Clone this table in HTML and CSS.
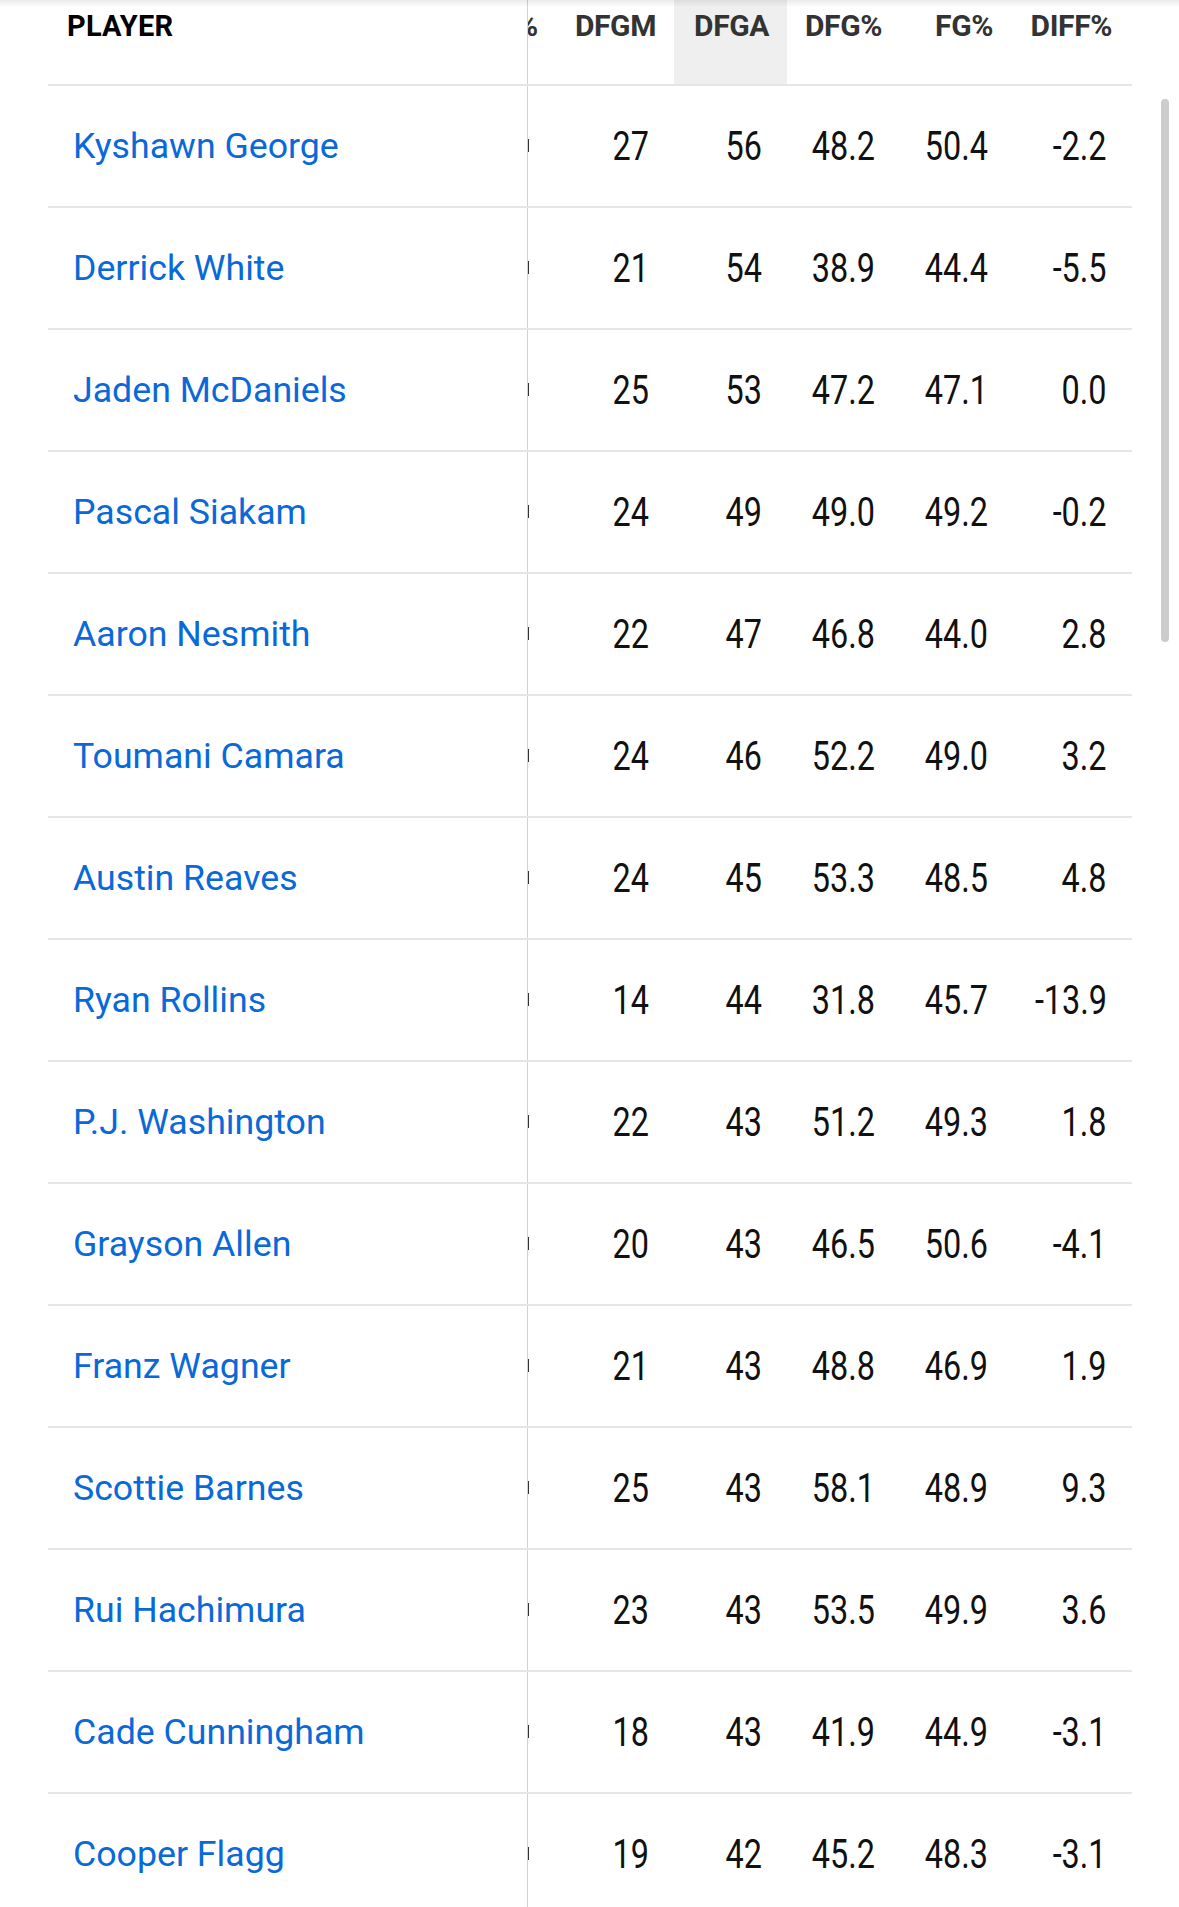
FILE: index.html
```html
<!DOCTYPE html>
<html lang="en">
<head>
<meta charset="utf-8">
<title>Defensive stats</title>
<link rel="stylesheet" href="styles.css">
</head>
<body>
<div class="page">
  <div class="stats">
    <div class="row head">
      <div class="cell name-col"><span class="player-h">PLAYER</span></div>
      <div class="cell part"><span class="hidden-h">%</span></div>
      <div class="cell num-h">DFGM</div>
      <div class="cell num-h sorted">DFGA</div>
      <div class="cell num-h">DFG%</div>
      <div class="cell num-h wide-h">FG%</div>
      <div class="cell num-h wide-h">DIFF%</div>
    </div>
    <div class="row"><div class="cell name-col"><a class="player">Kyshawn George</a></div><div class="cell part"><span class="sliver">0</span></div><div class="cell num"><span class="v">27</span></div><div class="cell num"><span class="v">56</span></div><div class="cell num"><span class="v">48.2</span></div><div class="cell num"><span class="v">50.4</span></div><div class="cell num"><span class="v">-2.2</span></div></div>
    <div class="row"><div class="cell name-col"><a class="player">Derrick White</a></div><div class="cell part"><span class="sliver">0</span></div><div class="cell num"><span class="v">21</span></div><div class="cell num"><span class="v">54</span></div><div class="cell num"><span class="v">38.9</span></div><div class="cell num"><span class="v">44.4</span></div><div class="cell num"><span class="v">-5.5</span></div></div>
    <div class="row"><div class="cell name-col"><a class="player">Jaden McDaniels</a></div><div class="cell part"><span class="sliver">0</span></div><div class="cell num"><span class="v">25</span></div><div class="cell num"><span class="v">53</span></div><div class="cell num"><span class="v">47.2</span></div><div class="cell num"><span class="v">47.1</span></div><div class="cell num"><span class="v">0.0</span></div></div>
    <div class="row"><div class="cell name-col"><a class="player">Pascal Siakam</a></div><div class="cell part"><span class="sliver">0</span></div><div class="cell num"><span class="v">24</span></div><div class="cell num"><span class="v">49</span></div><div class="cell num"><span class="v">49.0</span></div><div class="cell num"><span class="v">49.2</span></div><div class="cell num"><span class="v">-0.2</span></div></div>
    <div class="row"><div class="cell name-col"><a class="player">Aaron Nesmith</a></div><div class="cell part"><span class="sliver">0</span></div><div class="cell num"><span class="v">22</span></div><div class="cell num"><span class="v">47</span></div><div class="cell num"><span class="v">46.8</span></div><div class="cell num"><span class="v">44.0</span></div><div class="cell num"><span class="v">2.8</span></div></div>
    <div class="row"><div class="cell name-col"><a class="player">Toumani Camara</a></div><div class="cell part"><span class="sliver">0</span></div><div class="cell num"><span class="v">24</span></div><div class="cell num"><span class="v">46</span></div><div class="cell num"><span class="v">52.2</span></div><div class="cell num"><span class="v">49.0</span></div><div class="cell num"><span class="v">3.2</span></div></div>
    <div class="row"><div class="cell name-col"><a class="player">Austin Reaves</a></div><div class="cell part"><span class="sliver">0</span></div><div class="cell num"><span class="v">24</span></div><div class="cell num"><span class="v">45</span></div><div class="cell num"><span class="v">53.3</span></div><div class="cell num"><span class="v">48.5</span></div><div class="cell num"><span class="v">4.8</span></div></div>
    <div class="row"><div class="cell name-col"><a class="player">Ryan Rollins</a></div><div class="cell part"><span class="sliver">0</span></div><div class="cell num"><span class="v">14</span></div><div class="cell num"><span class="v">44</span></div><div class="cell num"><span class="v">31.8</span></div><div class="cell num"><span class="v">45.7</span></div><div class="cell num"><span class="v">-13.9</span></div></div>
    <div class="row"><div class="cell name-col"><a class="player">P.J. Washington</a></div><div class="cell part"><span class="sliver">0</span></div><div class="cell num"><span class="v">22</span></div><div class="cell num"><span class="v">43</span></div><div class="cell num"><span class="v">51.2</span></div><div class="cell num"><span class="v">49.3</span></div><div class="cell num"><span class="v">1.8</span></div></div>
    <div class="row"><div class="cell name-col"><a class="player">Grayson Allen</a></div><div class="cell part"><span class="sliver">0</span></div><div class="cell num"><span class="v">20</span></div><div class="cell num"><span class="v">43</span></div><div class="cell num"><span class="v">46.5</span></div><div class="cell num"><span class="v">50.6</span></div><div class="cell num"><span class="v">-4.1</span></div></div>
    <div class="row"><div class="cell name-col"><a class="player">Franz Wagner</a></div><div class="cell part"><span class="sliver">0</span></div><div class="cell num"><span class="v">21</span></div><div class="cell num"><span class="v">43</span></div><div class="cell num"><span class="v">48.8</span></div><div class="cell num"><span class="v">46.9</span></div><div class="cell num"><span class="v">1.9</span></div></div>
    <div class="row"><div class="cell name-col"><a class="player">Scottie Barnes</a></div><div class="cell part"><span class="sliver">0</span></div><div class="cell num"><span class="v">25</span></div><div class="cell num"><span class="v">43</span></div><div class="cell num"><span class="v">58.1</span></div><div class="cell num"><span class="v">48.9</span></div><div class="cell num"><span class="v">9.3</span></div></div>
    <div class="row"><div class="cell name-col"><a class="player">Rui Hachimura</a></div><div class="cell part"><span class="sliver">0</span></div><div class="cell num"><span class="v">23</span></div><div class="cell num"><span class="v">43</span></div><div class="cell num"><span class="v">53.5</span></div><div class="cell num"><span class="v">49.9</span></div><div class="cell num"><span class="v">3.6</span></div></div>
    <div class="row"><div class="cell name-col"><a class="player">Cade Cunningham</a></div><div class="cell part"><span class="sliver">0</span></div><div class="cell num"><span class="v">18</span></div><div class="cell num"><span class="v">43</span></div><div class="cell num"><span class="v">41.9</span></div><div class="cell num"><span class="v">44.9</span></div><div class="cell num"><span class="v">-3.1</span></div></div>
    <div class="row"><div class="cell name-col"><a class="player">Cooper Flagg</a></div><div class="cell part"><span class="sliver">0</span></div><div class="cell num"><span class="v">19</span></div><div class="cell num"><span class="v">42</span></div><div class="cell num"><span class="v">45.2</span></div><div class="cell num"><span class="v">48.3</span></div><div class="cell num"><span class="v">-3.1</span></div></div>
  </div>
  <div class="top-shade"></div>
  <div class="scroll-thumb"></div>
</div>
</body>
</html>
```

FILE: styles.css
```css
html, body {
  margin: 0;
  padding: 0;
  background: #ffffff;
}
body {
  height: 1907px;
  overflow: hidden;
  font-family: Roboto, "Noto Sans", sans-serif;
}
.page {
  position: relative;
  width: 1179px;
  height: 1907px;
  overflow: hidden;
}
.stats {
  margin-left: 48px;
  width: 1084px;
}
.row {
  display: grid;
  grid-template-columns: 480px 33px 113px 113px 113px 113px 119px;
  height: 120px;
  border-bottom: 2px solid #e6e6e6;
}
.row.head {
  height: 84px;
}
.cell {
  display: flex;
  align-items: center;
  justify-content: flex-end;
  box-sizing: border-box;
  overflow: hidden;
  white-space: nowrap;
}
.name-col {
  justify-content: flex-start;
  border-right: 1px solid #d2d2d2;
  padding-left: 25px;
}
.head .cell {
  align-items: flex-start;
}
.head .name-col {
  padding-left: 19px;
  padding-top: 9px;
}
.player-h {
  font-family: Roboto, sans-serif;
  font-weight: 700;
  font-size: 29px;
  color: #000;
  letter-spacing: 0.2px;
}
.part {
  justify-content: flex-start;
  padding-left: 0;
}
.head .part {
  padding-top: 8px;
}
.hidden-h {
  font-family: Roboto, sans-serif;
  font-weight: 700;
  font-size: 30px;
  color: #333;
  margin-left: -12px;
}
.sliver {
  display: inline-block;
  width: 2px;
  height: 13px;
  overflow: hidden;
  font-size: 2px;
  color: transparent;
  background: #333;
  margin-left: -1px;
  margin-top: -2px;
}
.num-h {
  font-family: Roboto, sans-serif;
  font-weight: 700;
  font-size: 30px;
  letter-spacing: -0.4px;
  color: #333;
  padding-right: 18px;
  padding-top: 8px;
}
.num-h.wide-h {
  padding-right: 20px;
}
.num-h.sorted {
  background: #efefef;
}
.player {
  font-family: Roboto, sans-serif;
  font-size: 35.7px;
  color: #0a69d8;
  text-decoration: none;
}
.num {
  padding-right: 25px;
}
.v {
  display: inline-block;
  font-family: Roboto, sans-serif;
  font-size: 40px;
  color: #111;
  transform: scaleX(0.81);
  transform-origin: right center;
}
.top-shade {
  position: absolute;
  left: 0;
  top: 0;
  width: 100%;
  height: 7px;
  background: linear-gradient(to bottom, rgba(0,0,0,0.08), rgba(0,0,0,0));
  pointer-events: none;
}
.scroll-thumb {
  position: absolute;
  left: 1161px;
  top: 99px;
  width: 8px;
  height: 543px;
  border-radius: 4px;
  background: #cccccc;
}
```
